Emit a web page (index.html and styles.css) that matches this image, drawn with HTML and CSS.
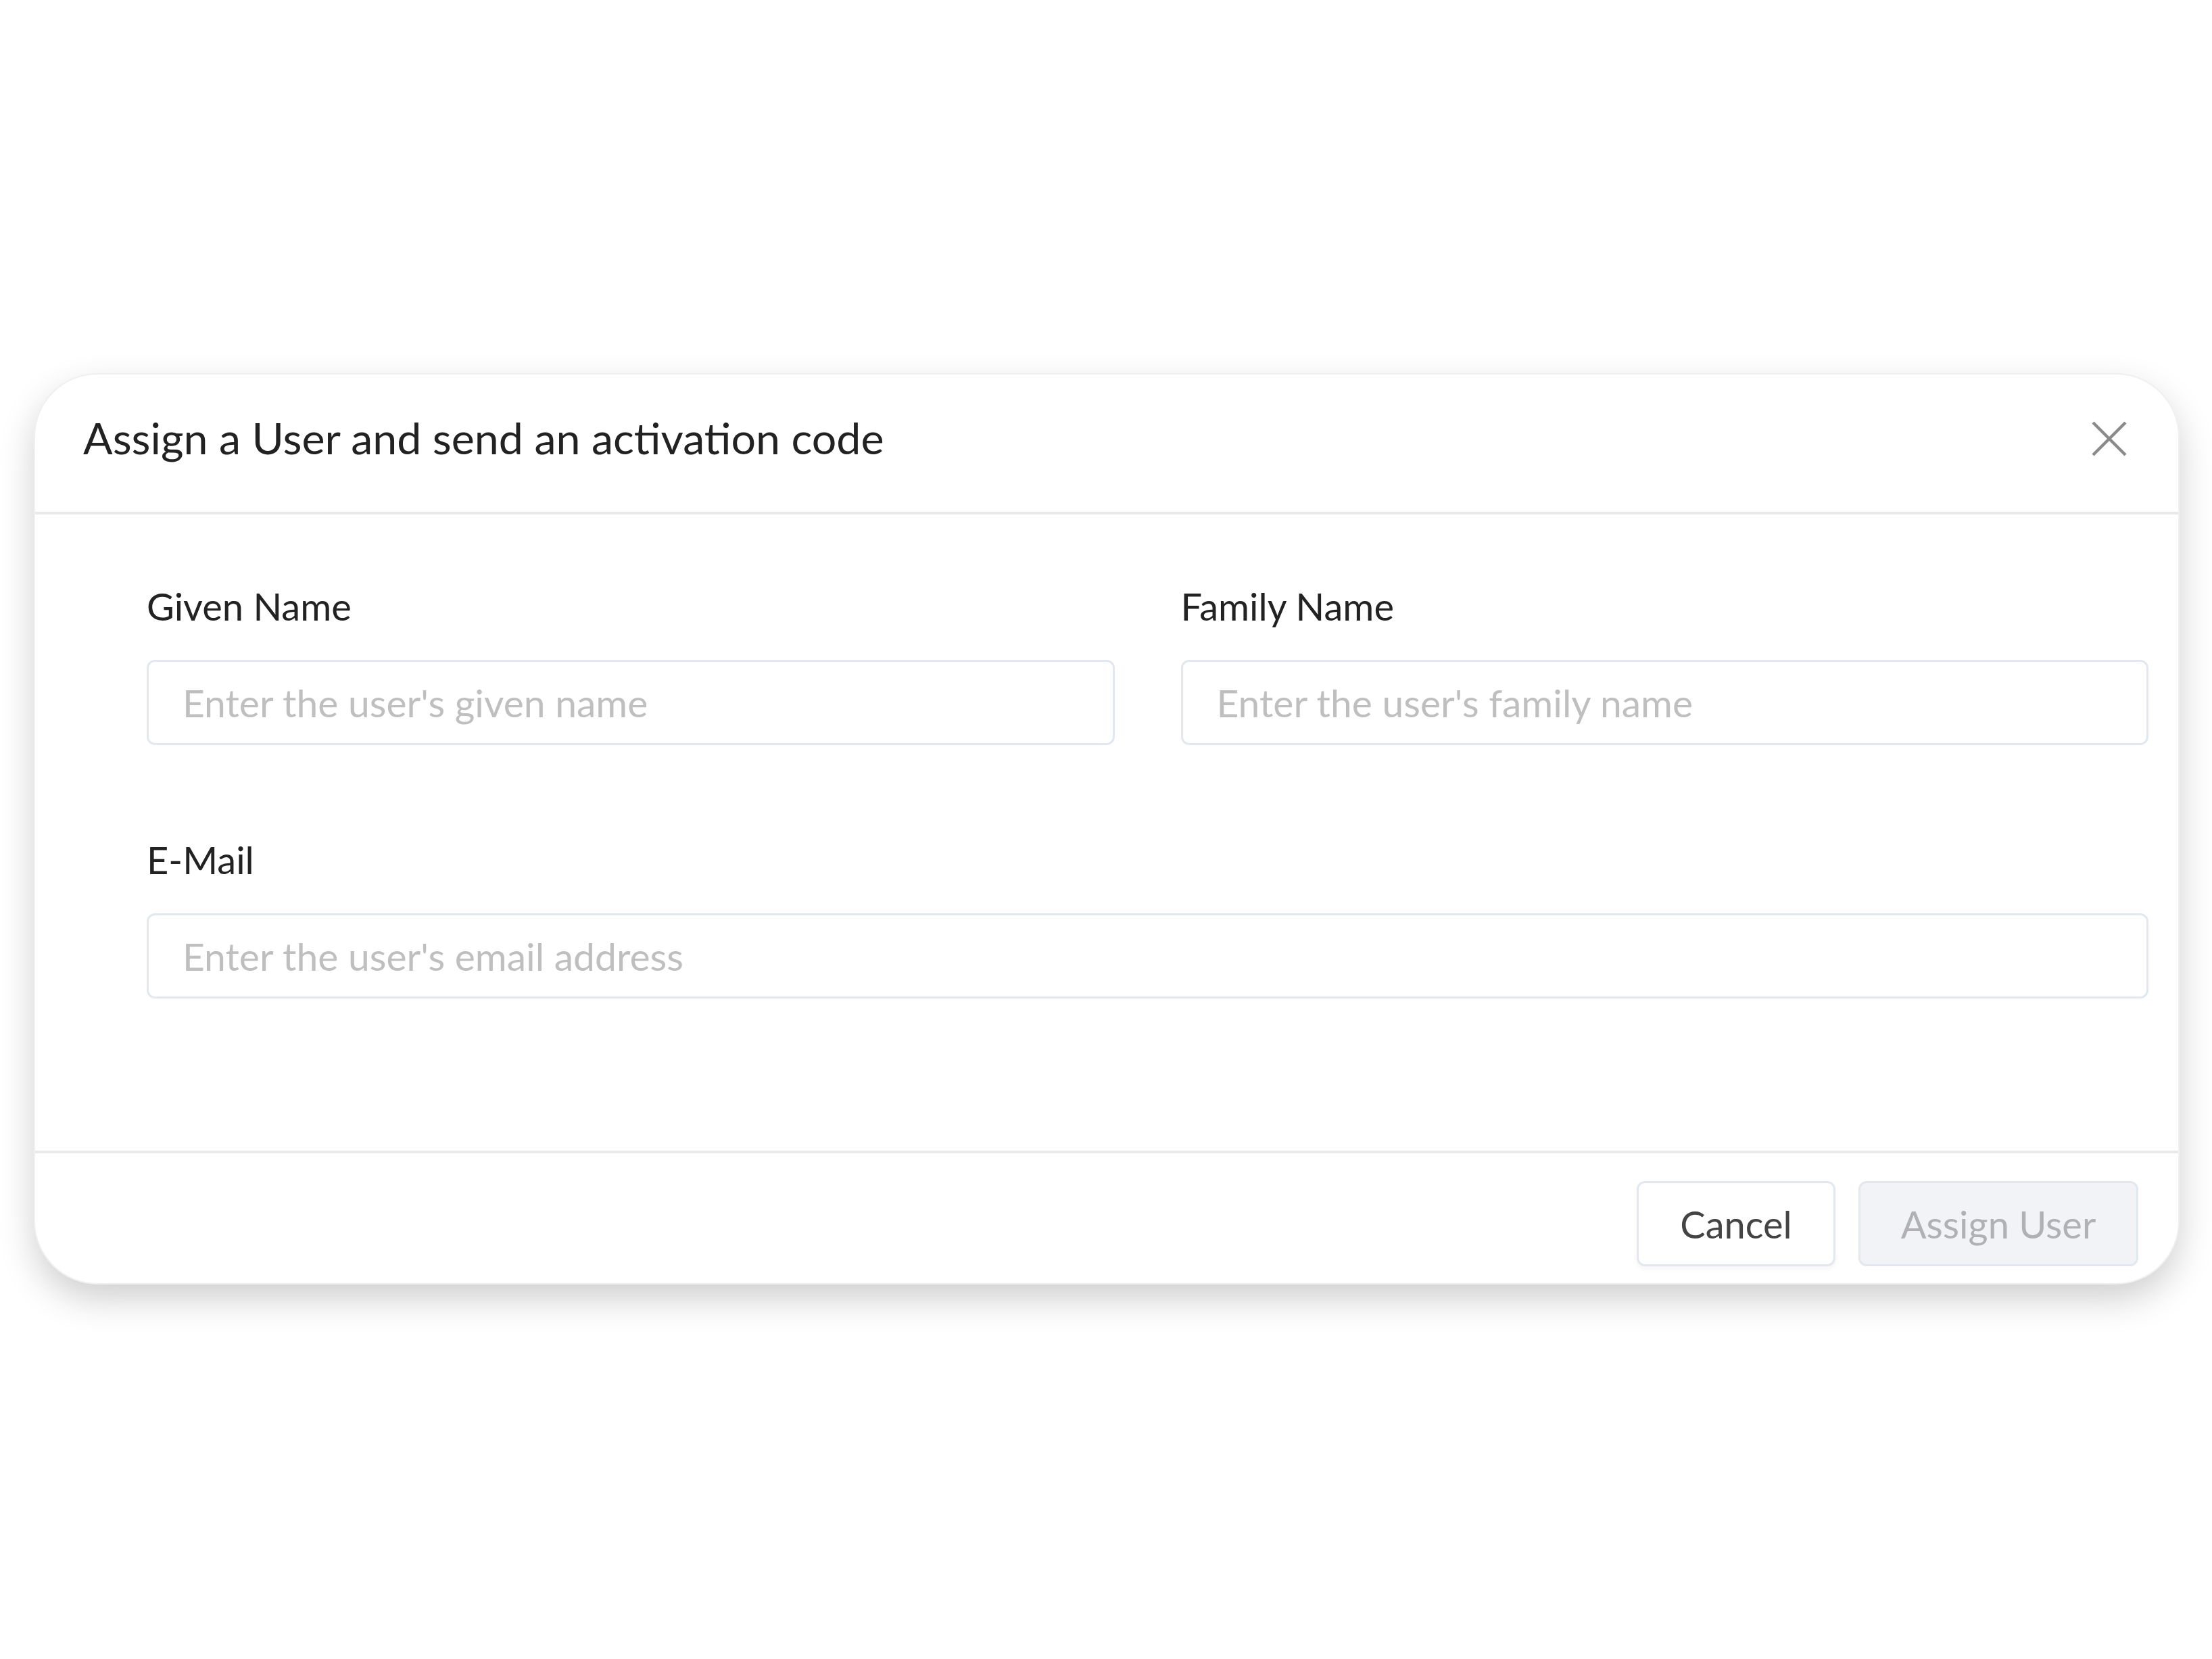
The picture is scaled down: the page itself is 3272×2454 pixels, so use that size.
FILE: index.html
```html
<!DOCTYPE html>
<html lang="en">
<head>
    <meta charset="UTF-8">
    <title>Assign User</title>
    <link rel="stylesheet" href="styles.css">
</head>
<body>
    <div class="modal">
        <header class="modal-header">
            <h2 class="modal-title">Assign a User and send an activation code</h2>
            <button class="close-btn" aria-label="Close">
                <svg width="52" height="52" viewBox="0 0 52 52">
                    <path d="M2 2 L50 50 M50 2 L2 50" stroke="#8a8a8a" stroke-width="4.5" fill="none"/>
                </svg>
            </button>
        </header>
        <div class="modal-body">
            <div class="form-grid">
                <div class="field">
                    <label for="given">Given Name</label>
                    <input id="given" type="text" placeholder="Enter the user's given name">
                </div>
                <div class="field">
                    <label for="family">Family Name</label>
                    <input id="family" type="text" placeholder="Enter the user's family name">
                </div>
                <div class="field full">
                    <label for="email">E-Mail</label>
                    <input id="email" type="email" placeholder="Enter the user's email address">
                </div>
            </div>
        </div>
        <footer class="modal-footer">
            <button class="btn btn-cancel">Cancel</button>
            <button class="btn btn-primary" disabled>Assign User</button>
        </footer>
    </div>
</body>
</html>
```

FILE: styles.css
```css
body {
    font-family: Lato, "Noto Sans", sans-serif;
    background-color: #ffffff;
    margin: 0;
    padding: 554px 0 500px 52px;
    color: #222;
}

.modal {
    width: 3170px;
    background-color: white;
    border-radius: 92px;
    box-shadow: 0 0 0 2px #f0f0f0, 0 22px 54px rgba(0, 0, 0, 0.2);
    overflow: hidden;
}

.modal-header {
    display: flex;
    align-items: center;
    justify-content: space-between;
    height: 190px;
    padding: 0 76px 13px 71px;
    border-bottom: 4px solid #e9e9e9;
}

.modal-title {
    margin: 0 0 4px;
    font-size: 64.5px;
    font-weight: 400;
    color: #222;
}

.close-btn {
    background: none;
    border: none;
    padding: 0;
    cursor: pointer;
    display: flex;
}

.modal-body {
    padding: 102px 44px 225px 165px;
}

.form-grid {
    display: grid;
    grid-template-columns: 1fr 1fr;
    column-gap: 98px;
    row-gap: 136px;
}

.field.full {
    grid-column: 1 / 3;
}

.field label {
    display: block;
    font-size: 56px;
    line-height: 1.2;
    margin-bottom: 46px;
    color: #222;
}

.field input {
    display: block;
    box-sizing: border-box;
    width: 100%;
    height: 126px;
    padding: 0 50px;
    border: 3px solid #e3e8ef;
    border-radius: 12px;
    font-family: inherit;
    font-size: 57px;
    color: #222;
    outline: none;
}

.field input::placeholder {
    color: #bfbfbf;
}

.modal-footer {
    display: flex;
    justify-content: flex-end;
    gap: 34px;
    padding: 41px 59px 25px;
    border-top: 4px solid #e9e9e9;
}

.btn {
    height: 126px;
    border-radius: 12px;
    font-family: inherit;
    font-size: 56px;
    border: 3px solid #e3e8ef;
    cursor: pointer;
}

.btn-cancel {
    width: 294px;
    background-color: white;
    color: #444;
    box-shadow: 0 6px 6px rgba(0, 0, 0, 0.03);
}

.btn-primary {
    width: 414px;
    background-color: #f1f3f7;
    color: #b0b0b5;
    cursor: default;
}
```
